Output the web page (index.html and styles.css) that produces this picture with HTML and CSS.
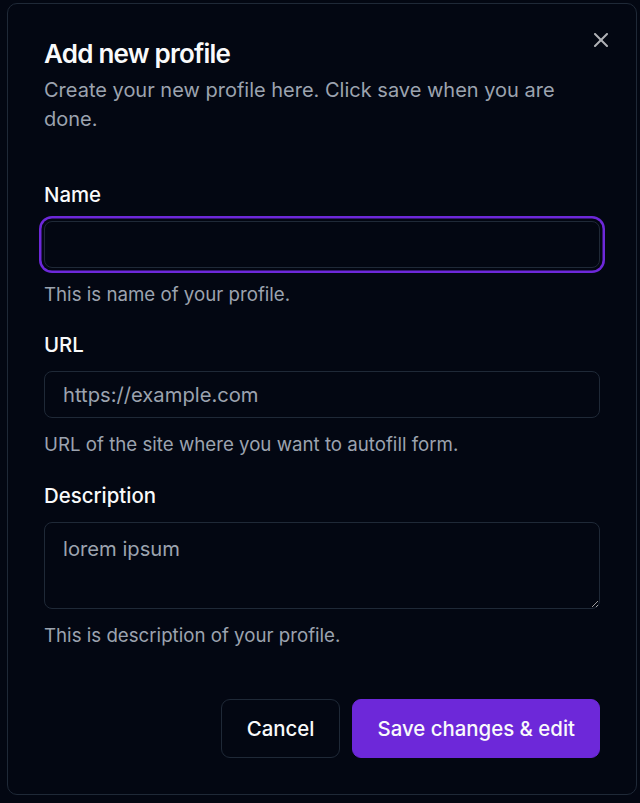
FILE: index.html
```html
<!DOCTYPE html>
<html lang="en">
<head>
<meta charset="utf-8">
<title>Add new profile</title>
<link rel="stylesheet" href="styles.css">
</head>
<body>
<div class="dialog" role="dialog" aria-labelledby="dlg-title">
  <div class="header">
    <h2 class="title" id="dlg-title">Add new profile</h2>
    <p class="desc">Create your new profile here. Click save when you are done.</p>
  </div>
  <form class="form">
    <div class="field">
      <label class="label" for="f-name">Name</label>
      <input class="input input-focus" id="f-name" type="text">
      <p class="hint">This is name of your profile.</p>
    </div>
    <div class="field">
      <label class="label" for="f-url">URL</label>
      <input class="input" id="f-url" type="text" placeholder="https://example.com">
      <p class="hint">URL of the site where you want to autofill form.</p>
    </div>
    <div class="field">
      <label class="label" for="f-desc">Description</label>
      <textarea class="input textarea" id="f-desc" placeholder="lorem ipsum"></textarea>
      <p class="hint">This is description of your profile.</p>
    </div>
    <div class="footer">
      <button type="button" class="btn btn-outline">Cancel</button>
      <button type="button" class="btn btn-primary">Save changes &amp; edit</button>
    </div>
  </form>
  <button type="button" class="close" aria-label="Close">
    <svg viewBox="0 0 24 24" width="24" height="24" fill="none" stroke="currentColor" stroke-width="2" stroke-linecap="round" stroke-linejoin="round"><path d="M18 6 6 18"/><path d="m6 6 12 12"/></svg>
  </button>
</div>
</body>
</html>
```
FILE: styles.css
```css
:root {
  color-scheme: dark;
}
* {
  box-sizing: border-box;
}
html, body {
  margin: 0;
  padding: 0;
  background: #030712;
}
body {
  font-family: Inter, "Noto Sans", "Liberation Sans", sans-serif;
  color: #f9fafb;
  height: 803px;
  overflow: hidden;
}
.dialog {
  position: relative;
  margin: 3px 3px 0 7px;
  border: 1px solid #1f2937;
  border-radius: 10px;
  padding: 36px;
  background: #030712;
}
.header {
  display: flex;
  flex-direction: column;
  gap: 9px;
}
.title {
  margin: 0;
  font-size: 26px;
  line-height: 27px;
  font-weight: 600;
  letter-spacing: -0.03em;
  color: #f9fafb;
}
.desc {
  margin: 0;
  font-size: 20px;
  line-height: 29px;
  color: #9ca3af;
}
.form {
  display: flex;
  flex-direction: column;
}
.field {
  display: flex;
  flex-direction: column;
  margin-top: 27.4px;
}
.field:first-child {
  margin-top: 51px;
}
.label {
  font-size: 20.4px;
  line-height: 20px;
  font-weight: 500;
  color: #f9fafb;
  margin-bottom: 16px;
}
.input {
  display: block;
  width: 100%;
  height: 47px;
  border: 1px solid #1f2937;
  border-radius: 8px;
  background: #030712;
  color: #f9fafb;
  font-family: inherit;
  font-size: 20.2px;
  padding: 0 18px;
  outline: none;
}
.input::placeholder {
  color: #9ca3af;
  opacity: 1;
}
.input-focus {
  box-shadow: 0 0 0 2.5px #030712, 0 0 0 5px #6d28d9;
}
.textarea {
  height: 87px;
  padding: 11px 18px;
  line-height: 29px;
  resize: vertical;
}
.hint {
  margin: 14px 0 0;
  font-size: 18.7px;
  line-height: 26px;
  color: #9ca3af;
}
.footer {
  display: flex;
  justify-content: flex-end;
  gap: 12px;
  margin-top: 50px;
}
.btn {
  height: 59px;
  padding: 0 24px;
  border-radius: 9px;
  font-family: inherit;
  font-size: 20.4px;
  font-weight: 500;
  color: #f9fafb;
  cursor: pointer;
}
.btn-outline {
  background: #030712;
  border: 1px solid #1f2937;
  padding: 0 25px;
}
.btn-primary {
  background: #6d28d9;
  border: 1px solid #6d28d9;
}
.close {
  position: absolute;
  top: 24px;
  right: 23px;
  width: 24px;
  height: 24px;
  padding: 0;
  border: 0;
  background: transparent;
  color: #f9fafb;
  opacity: 0.7;
  display: flex;
  align-items: center;
  justify-content: center;
  cursor: pointer;
}
.close svg {
  display: block;
}
```
